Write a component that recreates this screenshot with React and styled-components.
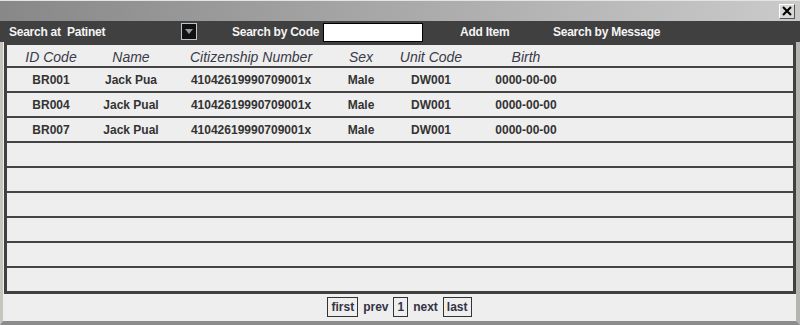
import React from "react";
import styled, { createGlobalStyle } from "styled-components";

const GlobalStyle = createGlobalStyle`
  html, body {
    margin: 0;
    padding: 0;
    background: #eeeeee;
  }
  * { box-sizing: border-box; }
`;

const columns = [
  { key: "id", title: "ID Code", width: 88 },
  { key: "name", title: "Name", width: 72 },
  { key: "cid", title: "Citizenship Number", width: 168 },
  { key: "sex", title: "Sex", width: 52 },
  { key: "unit", title: "Unit Code", width: 88 },
  { key: "birth", title: "Birth", width: 102 },
];

const patients = [
  { id: "BR001", name: "Jack Pua", cid: "41042619990709001x", sex: "Male", unit: "DW001", birth: "0000-00-00" },
  { id: "BR004", name: "Jack Pual", cid: "41042619990709001x", sex: "Male", unit: "DW001", birth: "0000-00-00" },
  { id: "BR007", name: "Jack Pual", cid: "41042619990709001x", sex: "Male", unit: "DW001", birth: "0000-00-00" },
];

const ROWS = 9;
const gridCols = columns.map((c) => c.width + "px").join(" ") + " 1fr";

const App = () => {
  const rows = [];
  for (let i = 0; i < ROWS; i++) rows.push(patients[i] || null);

  return (
    <StWindow>
      <GlobalStyle />
      <StTitleBar>
        <StCloseBtn>
          <svg width="10" height="10" viewBox="0 0 10 10">
            <path d="M1 1 L9 9 M9 1 L1 9" stroke="#000" strokeWidth="2" />
          </svg>
        </StCloseBtn>
      </StTitleBar>

      <StToolbar>
        <StToolLabel $width={172}>Search at&nbsp; Patinet</StToolLabel>
        <StDropdown>
          <svg width="8" height="5" viewBox="0 0 8 5">
            <path d="M0 0 L8 0 L4 5 Z" fill="#9a9a9a" />
          </svg>
        </StDropdown>
        <StToolLabel $ml={35} $width={88}>Search by Code</StToolLabel>
        <StCodeInput type="text" />
        <StToolLabel $ml={37} $width={50}>Add Item</StToolLabel>
        <StToolLabel $ml={43}>Search by Message</StToolLabel>
      </StToolbar>

      <StBody>
        <StTable>
          <StHeadRow>
            {columns.map((c) => (
              <StHeadCell key={c.key}>{c.title}</StHeadCell>
            ))}
            <span />
          </StHeadRow>
          {rows.map((r, i) => (
            <StRow key={i} $last={i === ROWS - 1}>
              {columns.map((c) => (
                <StCell key={c.key}>{r ? r[c.key] : ""}</StCell>
              ))}
              <span />
            </StRow>
          ))}
        </StTable>

        <StPager>
          <StPageBox>first</StPageBox>
          <StPageText>prev</StPageText>
          <StPageBox>1</StPageBox>
          <StPageText>next</StPageText>
          <StPageBox>last</StPageBox>
        </StPager>
      </StBody>
    </StWindow>
  );
};

export default App;

const StWindow = styled.div`
  width: 800px;
  height: 325px;
  display: flex;
  flex-direction: column;
  background: #eeeeee;
  font-family: "Liberation Sans", Arial, sans-serif;
`;

const StTitleBar = styled.div`
  height: 21px;
  flex-shrink: 0;
  display: flex;
  justify-content: flex-end;
  align-items: center;
  padding-right: 5px;
  border-top: 1px solid #e4e4e4;
  background: linear-gradient(to right, #888888, #cacaca);
`;

const StCloseBtn = styled.div`
  width: 16px;
  height: 15px;
  display: flex;
  align-items: center;
  justify-content: center;
  background: #d8d8d4;
  border: 1px solid;
  border-color: #ffffff #555555 #555555 #ffffff;
`;

const StToolbar = styled.div`
  height: 21px;
  flex-shrink: 0;
  display: flex;
  align-items: center;
  padding-left: 9px;
  background: #404040;
`;

const StToolLabel = styled.span`
  flex-shrink: 0;
  width: ${(p) => (p.$width ? p.$width + "px" : "auto")};
  margin-left: ${(p) => (p.$ml || 0)}px;
  color: #f4f4f4;
  font-size: 12px;
  font-weight: 700;
  letter-spacing: -0.25px;
  white-space: pre;
`;

const StDropdown = styled.div`
  width: 16px;
  height: 17px;
  display: flex;
  align-items: center;
  justify-content: center;
  background: #111111;
  border: 1px solid #b8c4d0;
`;

const StCodeInput = styled.input`
  width: 100px;
  height: 19px;
  margin: 1px 0 0 3px;
  padding: 0 3px;
  background: #ffffff;
  border: 1px solid #000000;
  outline: none;
`;

const StBody = styled.div`
  flex: 1;
  display: flex;
  flex-direction: column;
  border-left: 3px solid #c6c6be;
  border-right: 4px solid #b4b4b0;
  border-bottom: 4px solid #8c8c8c;
`;

const StTable = styled.div`
  margin-left: 1px;
  border: 3px solid #404040;
  background: #eeeeee;
`;

const StHeadRow = styled.div`
  display: grid;
  grid-template-columns: ${gridCols};
  height: 23px;
  padding-top: 2px;
  border-bottom: 2px solid #444444;
  align-items: center;
`;

const StHeadCell = styled.span`
  text-align: center;
  font-size: 14px;
  font-style: italic;
  color: #3a3a48;
  white-space: nowrap;
`;

const StRow = styled.div`
  display: grid;
  grid-template-columns: ${gridCols};
  height: ${(p) => (p.$last ? 23 : 25)}px;
  border-bottom: ${(p) => (p.$last ? "none" : "2px solid #444444")};
  align-items: center;
`;

const StCell = styled.span`
  text-align: center;
  font-size: 12px;
  font-weight: 700;
  color: #333333;
  white-space: nowrap;
`;

const StPager = styled.div`
  flex: 1;
  display: flex;
  justify-content: center;
  align-items: center;
  gap: 5px;
  padding-bottom: 1px;
`;

const StPageBox = styled.span`
  height: 20px;
  padding: 0 3px;
  display: flex;
  align-items: center;
  border: 1px solid #333333;
  font-size: 12px;
  font-weight: 700;
  color: #333344;
`;

const StPageText = styled.span`
  font-size: 12px;
  font-weight: 700;
  color: #333344;
`;
